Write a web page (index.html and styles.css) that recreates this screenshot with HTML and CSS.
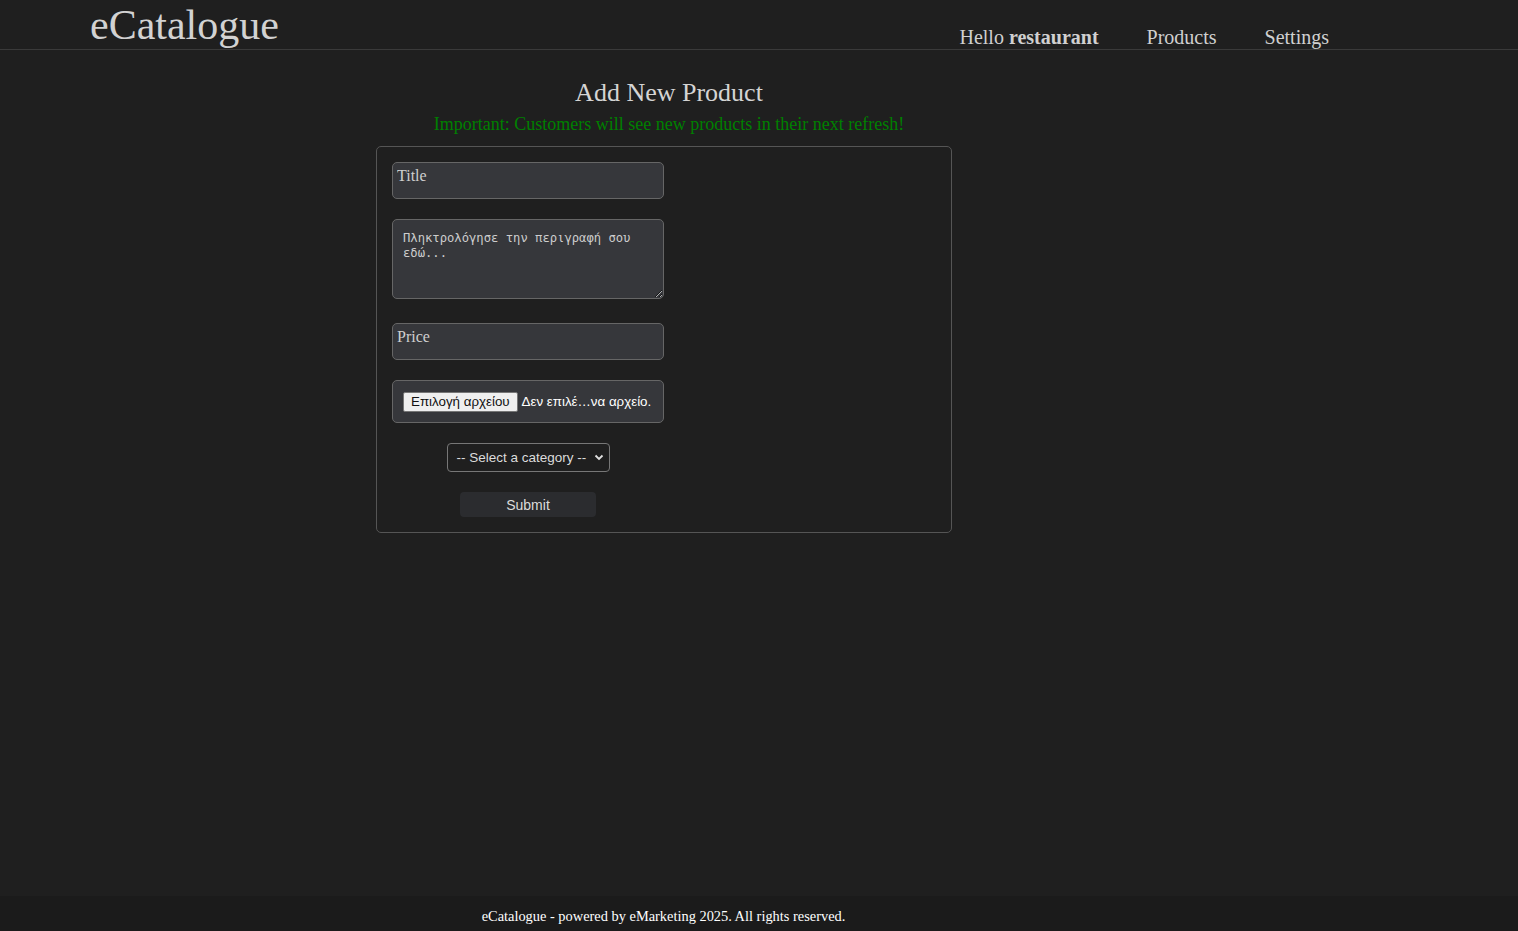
FILE: index.html
```html
<!DOCTYPE html>
<html lang="en">
<head>
<meta charset="utf-8">
<title>eCatalogue - Add New Product</title>
<link rel="stylesheet" href="styles.css">
</head>
<body>
<header class="topbar">
  <div class="brand">eCatalogue</div>
  <nav class="nav">
    <span class="nav-item">Hello <b>restaurant</b></span>
    <a class="nav-item" href="#">Products</a>
    <a class="nav-item" href="#">Settings</a>
  </nav>
</header>
<main class="main">
  <h2 class="page-title">Add New Product</h2>
  <p class="notice">Important: Customers will see new products in their next refresh!</p>
  <form class="card">
    <div class="col">
      <input class="field" type="text" placeholder="Title">
      <textarea class="area" placeholder="Πληκτρολόγησε την περιγραφή σου εδώ..."></textarea>
      <input class="field price" type="text" placeholder="Price">
      <div class="filebox">
        <span class="filebtn">Επιλογή αρχείου</span>
        <span class="filename">Δεν επιλέ…να αρχείο.</span>
      </div>
      <div class="select">
        <span>-- Select a category --</span>
        <svg class="chev" width="10" height="7" viewBox="0 0 10 7"><path d="M1.5 1.5 L5 5 L8.5 1.5" fill="none" stroke="#e0e0e0" stroke-width="1.8"/></svg>
      </div>
      <button class="submit" type="button">Submit</button>
    </div>
  </form>
</main>
<footer class="footer">
  <div class="footer-inner">eCatalogue - powered by eMarketing 2025. All rights reserved.</div>
</footer>
</body>
</html>
```
FILE: styles.css
```css
html, body {
  margin: 0;
  padding: 0;
}
body {
  background: #1f1f1f;
  color: #d0d0d0;
  font-family: "Liberation Serif", "Times New Roman", serif;
  min-height: 100vh;
  display: flex;
  flex-direction: column;
}
.topbar {
  height: 49px;
  border-bottom: 1px solid #3a3a3a;
  display: flex;
  justify-content: space-between;
  align-items: flex-end;
  padding: 0 189px 0 90px;
}
.brand {
  font-size: 42px;
  line-height: 46px;
  color: #d2d2d2;
  margin-bottom: 1px;
}
.nav {
  display: flex;
  gap: 48px;
  font-size: 20px;
  line-height: 22px;
  margin-bottom: 1px;
}
.nav-item {
  color: #d0d0d0;
  text-decoration: none;
}
.main {
  margin-left: 376px;
  width: 586px;
  display: flex;
  flex-direction: column;
}
.page-title {
  text-align: center;
  font-weight: normal;
  font-size: 26px;
  line-height: 30px;
  margin: 28px 0 0;
  color: #d4d4d4;
}
.notice {
  text-align: center;
  color: #008000;
  font-size: 18px;
  line-height: 22px;
  margin: 5px 0 0;
}
.card {
  margin-top: 11px;
  width: 544px;
  border: 1px solid #555;
  border-radius: 5px;
  padding: 15px 15px 15px 15px;
}
.col {
  width: 272px;
  display: flex;
  flex-direction: column;
  align-items: center;
}
.field {
  box-sizing: border-box;
  width: 272px;
  height: 37px;
  background: #36373b;
  border: 1px solid #666;
  border-radius: 5px;
  padding: 0 0 10px 4px;
  font-family: "Liberation Serif", "Times New Roman", serif;
  font-size: 16px;
  color: #d0d0d0;
  outline: none;
}
.field::placeholder {
  color: #cfcfcf;
}
.area {
  box-sizing: border-box;
  width: 272px;
  height: 80px;
  margin-top: 20px;
  background: #36373b;
  border: 1px solid #666;
  border-radius: 5px;
  padding: 11px 10px 10px;
  font-family: "DejaVu Sans Mono", monospace;
  font-size: 12.2px;
  line-height: 15px;
  color: #d0d0d0;
  resize: vertical;
  outline: none;
}
.area::placeholder {
  color: #cdcdcd;
}
.price {
  margin-top: 24px;
}
.filebox {
  box-sizing: border-box;
  width: 272px;
  height: 43px;
  margin-top: 20px;
  background: #36373b;
  border: 1px solid #666;
  border-radius: 5px;
  padding: 0 10px;
  display: flex;
  align-items: center;
  gap: 4px;
  font-family: "Liberation Sans", Arial, sans-serif;
  font-size: 13.33px;
}
.filebtn {
  background: #efefef;
  color: #111;
  border: 1px solid #767676;
  border-radius: 2px;
  padding: 1px 7px;
  line-height: 16px;
}
.filename {
  color: #ffffff;
}
.select {
  box-sizing: border-box;
  margin-top: 20px;
  width: 163px;
  height: 29px;
  border: 1px solid #777;
  border-radius: 4px;
  background: #1f1f1f;
  display: flex;
  align-items: center;
  justify-content: space-between;
  padding: 0 5px 0 9px;
  font-family: "Liberation Sans", Arial, sans-serif;
  font-size: 13.5px;
  color: #dcdcdc;
}
.submit {
  margin-top: 20px;
  width: 136px;
  height: 25px;
  border: none;
  border-radius: 4px;
  background: #2b2c2f;
  color: #dcdcdc;
  font-family: "Liberation Sans", Arial, sans-serif;
  font-size: 14px;
  padding: 0;
}
.footer {
  margin-top: auto;
  height: 35px;
  background: #1b1b1b;
}
.footer-inner {
  margin-left: 376px;
  width: 575px;
  text-align: center;
  color: #ffffff;
  font-size: 14.4px;
  line-height: 16px;
  padding-top: 12px;
}
```
